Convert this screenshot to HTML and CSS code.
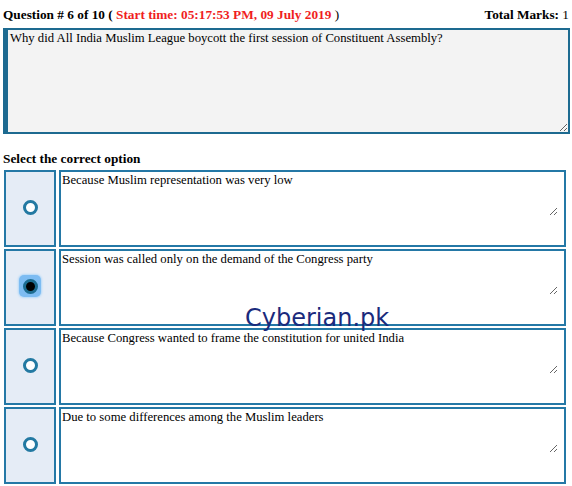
FILE: index.html
```html
<!DOCTYPE html>
<html>
<head>
<meta charset="utf-8">
<link rel="stylesheet" href="styles.css">
</head>
<body>
<div class="page">
  <div class="header">
    <div class="qtitle"><b>Question # 6 of 10 ( </b><b class="time">Start time: 05:17:53 PM, 09 July 2019</b> )</div>
    <div class="marks"><b>Total Marks:</b> 1</div>
  </div>
  <textarea class="question">Why did All India Muslim League boycott the first session of Constituent Assembly?</textarea>
  <div class="select">Select the correct option</div>
  <div class="options">
    <div class="radio-cell"><span class="radio"></span></div>
    <div class="text-cell"><textarea class="answer">Because Muslim representation was very low</textarea></div>
    <div class="radio-cell"><span class="radio checked"><span class="dot"></span></span></div>
    <div class="text-cell"><textarea class="answer">Session was called only on the demand of the Congress party</textarea></div>
    <div class="radio-cell"><span class="radio"></span></div>
    <div class="text-cell"><textarea class="answer">Because Congress wanted to frame the constitution for united India</textarea></div>
    <div class="radio-cell"><span class="radio"></span></div>
    <div class="text-cell"><textarea class="answer">Due to some differences among the Muslim leaders</textarea></div>
  </div>
  <div class="watermark">Cyberian.pk</div>
</div>
</body>
</html>
```

FILE: styles.css
```css
html, body {
  margin: 0;
  padding: 0;
  background: #ffffff;
}
body {
  font-family: "Liberation Serif", "Times New Roman", serif;
  font-size: 12.7px;
  color: #000;
}
.page {
  position: relative;
  padding: 7px 3px 0 3px;
}
.header {
  display: flex;
  justify-content: space-between;
  line-height: 15px;
  height: 15px;
  font-size: 13.3px;
}
.time {
  color: #f01e1e;
}
.question {
  display: block;
  box-sizing: border-box;
  margin: 6px 0 0 0;
  width: 567px;
  height: 106px;
  border: 2px solid #1d6a90;
  border-left-width: 5px;
  background: #f3f3f3;
  font-family: "Liberation Serif", "Times New Roman", serif;
  font-size: 12.7px;
  line-height: 15px;
  padding: 1px 2px;
  color: #000;
  outline: none;
}
.select {
  font-weight: bold;
  font-size: 13.3px;
  margin-top: 17px;
  line-height: 15px;
  height: 15px;
}
.options {
  display: grid;
  grid-template-columns: 52px 507px;
  grid-auto-rows: 77px;
  gap: 2px 3px;
  margin: 4px 0 0 1px;
}
.radio-cell {
  box-sizing: border-box;
  border: 2px solid #2478a6;
  background: #e5ecf6;
  display: flex;
  align-items: center;
  justify-content: center;
  padding-bottom: 3px;
}
.text-cell {
  box-sizing: border-box;
  border: 2px solid #2478a6;
  background: #fff;
}
.answer {
  display: block;
  box-sizing: border-box;
  border: none;
  margin: 0;
  width: 497px;
  height: 44px;
  padding: 1px 1px 1px 1px;
  font-family: "Liberation Serif", "Times New Roman", serif;
  font-size: 12.7px;
  line-height: 15px;
  background: transparent;
  color: #000;
  outline: none;
}
.radio {
  box-sizing: border-box;
  width: 15px;
  height: 15px;
  border-radius: 50%;
  border: 3px solid #2379a2;
  background: #fff;
  display: block;
}
.radio.checked {
  width: 22px;
  height: 22px;
  border-radius: 5px;
  border: none;
  background: #7dbcf2;
  box-shadow: 0 0 2px 1px #b4d9f8;
  display: flex;
  align-items: center;
  justify-content: center;
}
.radio.checked .dot {
  box-sizing: border-box;
  width: 15px;
  height: 15px;
  border-radius: 50%;
  border: 3px solid #1c6c90;
  background: #000;
}
.watermark {
  position: absolute;
  left: 245px;
  top: 304px;
  font-family: "DejaVu Sans", Verdana, sans-serif;
  font-size: 24px;
  line-height: 28px;
  color: #1a2a7c;
  pointer-events: none;
}
```
